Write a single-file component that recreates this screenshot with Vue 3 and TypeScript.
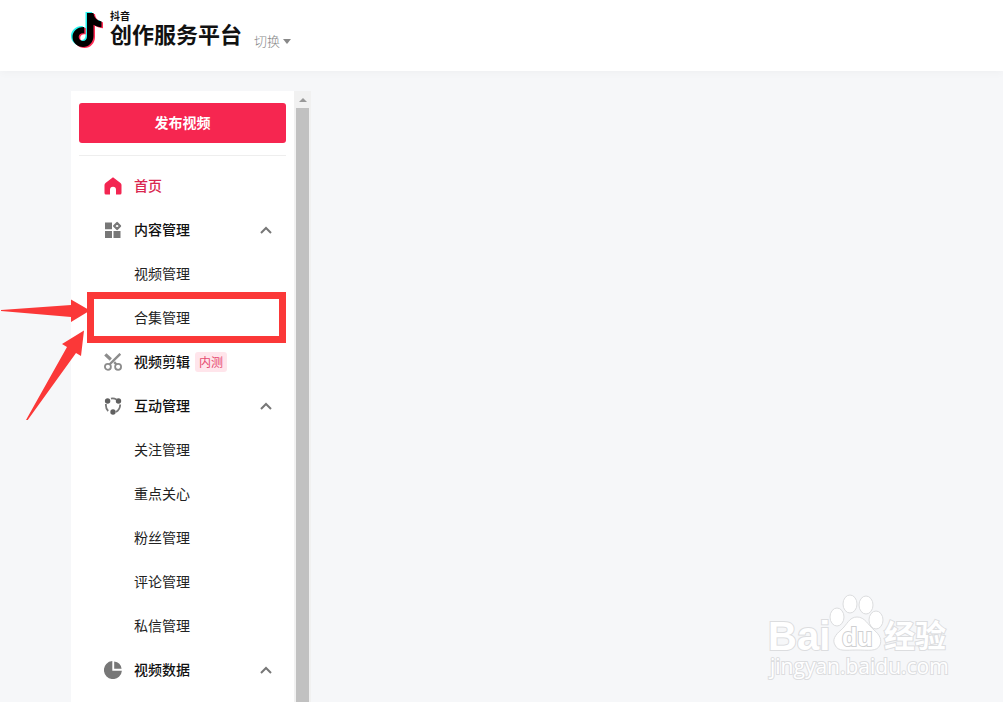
<script setup lang="ts">
import { ref } from 'vue'

type Icon = 'home' | 'grid' | 'cut' | 'share' | 'pie'
interface Group {
  label: string
  icon: Icon
  active?: boolean
  badge?: string
  children?: string[]
}

const groups: Group[] = [
  { label: '首页', icon: 'home', active: true },
  { label: '内容管理', icon: 'grid', children: ['视频管理', '合集管理'] },
  { label: '视频剪辑', icon: 'cut', badge: '内测' },
  { label: '互动管理', icon: 'share', children: ['关注管理', '重点关心', '粉丝管理', '评论管理', '私信管理'] },
  { label: '视频数据', icon: 'pie', children: [] },
]

const closed = ref<string[]>([])
function toggle(label: string) {
  closed.value = closed.value.includes(label)
    ? closed.value.filter((l) => l !== label)
    : [...closed.value, label]
}
</script>

<template>
  <div class="page">
    <header class="header">
      <svg class="note" viewBox="0 0 34 38" aria-hidden="true">
        <defs>
          <path
            id="note-shape"
            d="M15.500 1h6.500c.3 4.400 3.400 7.800 8 8.300v6c-3 0-5.600-.9-8-2.500V24c0 6.200-4.600 11-10.500 11S1 30.500 1 25s4.700-10.300 11.800-10v6.400c-3.500-.5-5.600 1.300-5.600 3.700 0 2.300 1.900 4 4.200 4 2.600 0 4.100-1.800 4.100-4.800z"
          />
        </defs>
        <use href="#note-shape" x="0" y="0" fill="#25f4ee" />
        <use href="#note-shape" x="3" y="2" fill="#fe2c55" />
        <use href="#note-shape" x="1.500" y="1" fill="#000" />
      </svg>
      <div class="brand">
        <span class="brand-small">抖音</span>
        <span class="brand-name">创作服务平台</span>
      </div>
      <button class="switch" type="button">切换<i class="caret"></i></button>
    </header>

    <div class="body">
      <aside class="sidebar">
        <button class="publish" type="button">发布视频</button>
        <nav class="nav">
          <template v-for="g in groups" :key="g.label">
            <button class="row group" :class="{ active: g.active }" type="button" @click="toggle(g.label)">
              <svg class="icon" viewBox="0 0 18 18" aria-hidden="true">
                <path
                  v-if="g.icon === 'home'"
                  fill="#f32551"
                  d="M9 .2 16.500 6q1 .8 1 2v8q0 1.500-1.500 1.500h-4V12.800a3 3 0 0 0-6 0v4.700H2Q.5 17.500.5 16V8q0-1.200 1-2z"
                />
                <g v-else-if="g.icon === 'grid'" fill="#777">
                  <path d="M1 1.500h7v6.700H1zM1 10h7v7H1zM9.500 10h7v7h-7z" />
                  <path d="M13.100 2 16.100 5l-3 3L10.100 5z" fill="none" stroke="#777" stroke-width="2.200" stroke-linejoin="round" />
                </g>
                <g v-else-if="g.icon === 'cut'" fill="none" stroke="#8c8c8c">
                  <circle cx="3.900" cy="13.800" r="3" stroke-width="1.800" />
                  <circle cx="14.100" cy="13.800" r="3" stroke-width="1.800" />
                  <path d="M5.500 11.500 16.300.8M12.500 11.500l-2.300-2.300" stroke-width="2.400" />
                  <path d="M1.300 1.300 6.800 6.500" stroke-width="3.200" />
                </g>
                <g v-else-if="g.icon === 'share'" fill="none" stroke="#777" stroke-width="1.800">
                  <path d="M7 1.700Q9.500.9 12.500 2.500M1.900 7Q1.600 11.500 4.200 14M16.200 7.500Q16.100 12.500 12 15" />
                  <g fill="#606060" stroke="none">
                    <circle cx="3.600" cy="4" r="2.700" />
                    <circle cx="14.500" cy="4" r="2.700" />
                    <circle cx="9" cy="15" r="2.700" />
                  </g>
                </g>
                <g v-else fill="#777">
                  <path d="M8.300.1V9.700h9.600A9 9 0 1 1 8.300.1z" />
                  <path d="M10.200.4a8.500 8.500 0 0 1 7.400 7.400h-7.400z" />
                </g>
              </svg>
              <span class="label">{{ g.label }}</span>
              <span v-if="g.badge" class="badge">{{ g.badge }}</span>
              <svg v-if="g.children" class="chevron" viewBox="0 0 12 8" aria-hidden="true">
                <path d="M1 7l5-5 5 5" fill="none" stroke="#777" stroke-width="2" />
              </svg>
            </button>
            <template v-if="g.children && !closed.includes(g.label)">
              <a v-for="c in g.children" :key="c" class="row child" href="#"><span class="label">{{ c }}</span></a>
            </template>
          </template>
        </nav>
      </aside>
      <div class="scrollbar" aria-hidden="true">
        <i class="scroll-up"></i>
        <div class="thumb"></div>
      </div>
    </div>

    <svg class="marks" viewBox="0 0 290 140" aria-hidden="true">
      <rect x="90.500" y="15.500" width="192" height="44" fill="none" stroke="#fb3838" stroke-width="7" />
      <path fill="#fb3838" d="M1 30 71 25v-5.500L90 30.500 71 42v-5L1 31z" />
      <path fill="#fb3838" d="M84 50.500 81 76l-5-3L27 141l-1-1L67 67l-5-3z" />
    </svg>

    <svg class="watermark" viewBox="0 0 190 95" aria-label="Baidu 经验">
      <g class="wm-fill">
        <ellipse cx="76" cy="32" rx="7" ry="9" />
        <ellipse cx="89" cy="19" rx="7" ry="9" />
        <ellipse cx="105" cy="20" rx="7" ry="9" />
        <ellipse cx="115" cy="35" rx="7" ry="9" />
        <path d="M96 32C104 32 107 40 113 45S121 55 119 60C116 67 107 65 96 65S77 67 74 60C71 55 74 50 80 45S88 32 96 32Z" />
        <text class="wm-bai" x="7" y="65">Bai</text>
        <text class="wm-du" x="81" y="61">du</text>
        <text class="wm-cn" x="123" y="62">经验</text>
        <text class="wm-url" x="9" y="89">jingyan.baidu.com</text>
      </g>
    </svg>
  </div>
</template>

<style>
body {
  margin: 0;
}
</style>

<style scoped>
.page {
  position: relative;
  display: flex;
  flex-direction: column;
  height: 100vh;
  overflow: hidden;
  background: #f6f7f9;
  color: #222;
  font-family: 'Liberation Sans', 'Noto Sans CJK SC', sans-serif;
  font-size: 14px;
}
button {
  border: 0;
  padding: 0;
  background: none;
  font: inherit;
  color: inherit;
  cursor: pointer;
}
.header {
  display: flex;
  flex: none;
  box-sizing: border-box;
  height: 71px;
  padding: 11px 70px 0;
  background: #fff;
  box-shadow: 0 2px 8px rgba(0, 0, 0, 0.03);
}
.note {
  width: 34px;
  height: 38px;
}
.brand {
  display: flex;
  flex-direction: column;
  margin-left: 6px;
  color: #111;
  font-weight: 700;
}
.brand-small {
  font-size: 10px;
  line-height: 12px;
}
.brand-name {
  font-size: 22px;
  line-height: 26px;
}
.switch {
  display: flex;
  align-items: center;
  align-self: flex-start;
  height: 20px;
  margin: 19px 0 0 12px;
  color: #888;
  font-size: 13px;
  font-weight: 300;
}
.caret {
  margin: 2px 0 0 3px;
  border: 4px solid transparent;
  border-top: 5px solid #888;
  border-bottom: 0;
}
.body {
  display: flex;
  flex: 1;
  min-height: 0;
  padding: 20px 0 0 71px;
}
.sidebar {
  box-sizing: border-box;
  width: 223px;
  padding: 12px 8px 0;
  overflow: hidden;
  background: #fff;
}
.publish {
  display: block;
  width: 100%;
  height: 40px;
  padding-bottom: 2px;
  border-radius: 3px;
  background: #f62650;
  color: #fff;
  font-weight: 700;
}
.nav {
  display: flex;
  flex-direction: column;
  margin-top: 12px;
  padding-top: 8px;
  border-top: 1px solid #eee;
}
.row {
  display: flex;
  flex: none;
  align-items: center;
  height: 44px;
}
.group {
  padding: 0 14px 0 25px;
  color: #111;
  font-family: 'Noto Sans CJK SC', sans-serif;
  font-weight: 500;
}
.group.active {
  color: #d9274f;
}
.child {
  padding-left: 55px;
  color: #222;
  text-decoration: none;
}
.label {
  padding-bottom: 2px;
}
.icon {
  width: 18px;
  height: 18px;
  margin-right: 12px;
}
.badge {
  margin-left: 5px;
  padding: 0 4px;
  border-radius: 3px;
  background: #ffe5eb;
  color: #e64a70;
  font-size: 12px;
  font-weight: 400;
  line-height: 20px;
}
.chevron {
  width: 12px;
  height: 8px;
  margin-left: auto;
}
.scrollbar {
  display: flex;
  flex-direction: column;
  align-items: center;
  width: 17px;
  background: #f1f1f1;
}
.scroll-up {
  margin: 7px 0 6px;
  border: 4px solid transparent;
  border-top: 0;
  border-bottom-color: #999;
}
.thumb {
  flex: 1;
  width: 13px;
  background: #c1c1c1;
}
.marks {
  position: absolute;
  top: 280px;
  left: 0;
  width: 290px;
  height: 140px;
  pointer-events: none;
}
.watermark {
  position: absolute;
  right: 52px;
  bottom: 22px;
  width: 190px;
  height: 95px;
}
.wm-fill {
  fill: #fff;
  stroke: #dcdddf;
  stroke-width: 1;
}
.wm-fill text {
  paint-order: stroke;
  stroke-width: 2;
}
.wm-bai {
  font: 700 40px 'Liberation Sans', sans-serif;
}
.wm-fill .wm-du {
  font: 700 25px 'Liberation Sans', sans-serif;
  stroke: #cfd0d2;
}
.wm-cn {
  font: 700 31px 'Noto Sans CJK SC', sans-serif;
}
.wm-url {
  font: 400 21px 'Open Sans', sans-serif;
}
</style>
